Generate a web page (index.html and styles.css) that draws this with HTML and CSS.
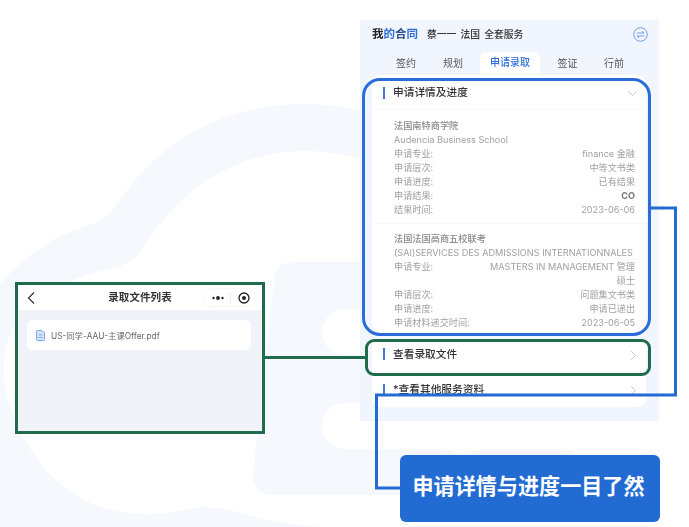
FILE: index.html
```html
<!DOCTYPE html>
<html lang="zh">
<head>
<meta charset="utf-8">
<title>申请详情与进度</title>
<link rel="stylesheet" href="styles.css">
</head>
<body>
<div class="canvas">
  <svg class="watermark" width="689" height="527" viewBox="0 0 689 527" aria-hidden="true">
    <path class="mark" fill-rule="evenodd" d="M0 284 C25 255 55 235 90 225 C102 222 110 214 118 203 C160 140 225 104 305 104 C325 104 345 106 365 112 L365 160 C345 154 325 151 305 151 C240 151 185 185 146 243 C138 257 128 264 114 268 C75 275 30 297 12 330 C2 350 2 375 7 397 C15 425 25 442 33 453 C50 478 75 498 100 507 C125 515 150 515 167 513 C185 511 195 506 207 507 C225 508 245 514 267 520 C290 525 315 527 333 527 L0 527 Z"/>
    <path class="mark" d="M293 262 H365 V309 H345 A23 23 0 0 0 345 355 H365 V403 H345 A23 23 0 0 0 345 449 H440 C448 449 455 452 462 459 C470 452 478 449 486 449 H560 C570 449 575 455 578 462 L600 495 H272 C260 495 253 487 253 475 L274 280 C275 268 282 262 293 262 Z"/>
  </svg>

  <section class="files">
    <header class="files-nav">
      <svg class="back" width="9" height="14" viewBox="0 0 9 14"><path d="M7 1.500 L1.500 7 L7 12.500"/></svg>
      <h2 class="files-title">录取文件列表</h2>
      <div class="capsule">
        <svg width="12" height="6" viewBox="0 0 12 6"><circle cx="1.500" cy="3" r="1.200"/><circle cx="6" cy="3" r="1.900"/><circle cx="10.500" cy="3" r="1.200"/></svg>
        <span class="capsule-sep"></span>
        <svg width="12" height="12" viewBox="0 0 12 12"><circle class="ring" cx="6" cy="6" r="5"/><circle cx="6" cy="6" r="2"/></svg>
      </div>
    </header>
    <div class="files-body">
      <div class="file-card">
        <svg class="file-icon" width="9" height="11" viewBox="0 0 9 11"><path class="doc" d="M1.500 .5 H6 L8.500 3 V9.500 A1 1 0 0 1 7.500 10.500 H1.500 A1 1 0 0 1 .5 9.500 V1.500 A1 1 0 0 1 1.500 .5 Z"/><path class="doc-line" d="M2.500 5 H6.500 M2.500 7.500 H6.500"/></svg>
        <span>US-同学-AAU-主课Offer.pdf</span>
      </div>
    </div>
  </section>

  <section class="phone">
    <div class="head">
      <strong class="brand">我<b>的</b><i>合</i><b>同</b></strong>
      <span class="client">蔡一一 法国 全套服务</span>
      <svg class="swap" width="15" height="15" viewBox="0 0 15 15"><circle cx="7.500" cy="7.500" r="6.800"/><path d="M3.800 6 H11 L9 4.200 M11.200 9 H4 L6 10.800"/></svg>
    </div>
    <nav class="tabs">
      <span>签约</span><span>规划</span><span class="on">申请录取</span><span>签证</span><span>行前</span>
    </nav>
    <div class="sheet">
      <div class="sec-head"><h3>申请详情及进度</h3><svg class="chev" width="11" height="7" viewBox="0 0 11 7"><path d="M1 1 L5.500 5.500 L10 1"/></svg></div>
      <div class="school">
        <h4>法国南特商学院</h4>
        <p class="en">Audencia Business School</p>
        <div class="row"><span>申请专业:</span><span>finance 金融</span></div>
        <div class="row"><span>申请层次:</span><span>中等文书类</span></div>
        <div class="row"><span>申请进度:</span><span>已有结果</span></div>
        <div class="row"><span>申请结果:</span><span class="result">CO</span></div>
        <div class="row"><span>结果时间:</span><span>2023-06-06</span></div>
      </div>
      <div class="school">
        <h4>法国法国高商五校联考</h4>
        <p class="en">(SAI)SERVICES DES ADMISSIONS INTERNATIONNALES</p>
        <div class="row"><span>申请专业:</span><span class="wrap">MASTERS IN MANAGEMENT 管理硕士</span></div>
        <div class="row"><span>申请层次:</span><span>问题集文书类</span></div>
        <div class="row"><span>申请进度:</span><span>申请已递出</span></div>
        <div class="row"><span>申请材料递交时间:</span><span>2023-06-05</span></div>
      </div>
    </div>
    <div class="link link-first"><h3>查看录取文件</h3><svg class="chev" width="7" height="11" viewBox="0 0 7 11"><path d="M1 1 L5.500 5.500 L1 10"/></svg></div>
    <div class="link link-second"><h3>*查看其他服务资料</h3><svg class="chev" width="7" height="11" viewBox="0 0 7 11"><path d="M1 1 L5.500 5.500 L1 10"/></svg></div>
  </section>

  <div class="frame frame-blue"></div>
  <div class="frame frame-green"></div>
  <svg class="wires" width="689" height="527" viewBox="0 0 689 527" aria-hidden="true">
    <path class="wire-green" d="M265 357.500 H366"/>
    <path class="wire-blue" d="M651 208 H675.500 V395 H376.500 V488 H400"/>
  </svg>

  <div class="callout">申请详情与进度一目了然</div>
</div>
</body>
</html>
```

FILE: styles.css
```css
* { box-sizing: border-box; margin: 0; padding: 0; }
html, body { background: #fff; }
body { font-family: Inter, "Noto Sans CJK SC", "Noto Sans", sans-serif; }
.canvas { position: relative; width: 689px; height: 527px; overflow: hidden; background: #fff; }
.watermark, .wires { position: absolute; left: 0; top: 0; }
.mark { fill: #f5f8fd; }
.wires { fill: none; pointer-events: none; }
.wire-green { stroke: #1f6b4b; stroke-width: 3; fill: none; }
.wire-blue { stroke: #226bd3; stroke-width: 3; fill: none; }

/* left window */
.files { position: absolute; left: 15px; top: 282px; width: 250px; height: 152px; border: 3px solid #1f6b4b; display: flex; flex-direction: column; background: #f0f4f8; }
.files-nav { position: relative; height: 25px; background: #fff; display: flex; align-items: center; justify-content: center; flex: none; filter: blur(.35px); }
.back { position: absolute; left: 9px; top: 6px; fill: none; stroke: #333; stroke-width: 1.200; }
.files-title { font-size: 10.500px; font-weight: 700; color: #333; line-height: 25px; letter-spacing: .1px; }
.capsule { position: absolute; left: 185px; top: 3px; width: 54px; height: 19px; border: 1px solid #f6f6f6; border-radius: 10px; display: flex; align-items: center; padding-left: 8px; gap: 6px; }
.capsule svg { fill: #222; flex: none; }
.capsule-sep { width: 1px; height: 11px; background: #eee; flex: none; margin-right: 1px; }
.ring { fill: none; stroke: #222; stroke-width: 1.300; }
.files-body { flex: 1; padding: 10px 11px 10px 9px; filter: blur(.35px); }
.file-card { height: 30px; background: #fff; border-radius: 6px; display: flex; align-items: center; gap: 6px; padding-left: 9px; font-size: 8.300px; color: #666; }
.file-icon { flex: none; }
.doc { fill: #d5e3fa; stroke: #7ba5ea; stroke-width: 1; }
.doc-line { stroke: #7ba5ea; stroke-width: .8; fill: none; }

/* phone */
.phone { position: absolute; left: 360px; top: 20px; width: 299px; height: 401px; background: #f1f6fe; filter: blur(.4px); }
.head { height: 29px; display: flex; align-items: center; padding: 0 12px; position: relative; }
.brand { font-size: 11.500px; font-weight: 700; color: #222; line-height: 29px; white-space: nowrap; }
.brand b { color: #2f6fd6; font-weight: 700; }
.brand i { color: #2a4f8a; font-style: normal; }
.client { font-size: 9.800px; font-weight: 500; color: #333; margin-left: 9px; line-height: 29px; word-spacing: 1.500px; }
.swap { margin-left: auto; margin-right: -1px; fill: none; stroke: #6f9fe6; stroke-width: 1; }
.tabs { height: 23px; margin: 3px 0 0 22.500px; display: flex; align-items: center; font-size: 10px; color: #555; }
.tabs span { line-height: 21px; text-align: center; width: 47px; }
.tabs .on { width: 60px; height: 23px; background: #fff; color: #2f6fd6; font-weight: 500; border-radius: 6px 6px 0 0; margin-left: 3.500px; }
.tabs span:nth-child(4) { margin-left: 4px; }
.tabs span:nth-child(5) { width: 46px; }
.sheet { margin: 0 13px 0 12px; background: #fff; border-radius: 8px 8px 0 0; height: 261px; }
.sec-head { position: relative; height: 35px; padding: 2px 0 0 21px; display: flex; align-items: center; border-bottom: 1px solid #f8f8f8; }
.sec-head h3, .link h3 { font-size: 10.700px; font-weight: 500; color: #333; line-height: 14px; }
.sec-head::before, .link::before { content: ""; position: absolute; left: 11px; width: 2px; height: 12px; background: #3f78d8; top: 12px; }
.sec-head .chev { margin-left: auto; margin-right: 8px; }
.chev { fill: none; stroke: #c9c9c9; stroke-width: 1; flex: none; }
.school { padding: 9px 11px 6px 22px; font-size: 9.150px; color: #a0a0a0; line-height: 14px; border-bottom: 1px solid #f8f8f8; }
.school + .school { padding-top: 8px; }
.school h4 { font-size: 9.200px; font-weight: 500; color: #8a8a8a; line-height: 14px; }
.en { white-space: nowrap; }
.row { display: flex; justify-content: space-between; gap: 20px; }
.row span:first-child { flex: none; }
.row span:last-child { text-align: right; }
.result { font-weight: 700; color: #777; }
.wrap { width: 150px; }
.school:last-child { border-bottom: 0; }
.link { position: relative; margin: 0 13px 0 12px; background: #fff; padding-left: 21px; display: flex; align-items: center; }
.link .chev { margin-left: auto; margin-right: 9px; }
.link-first { height: 36px; margin-top: 3px; padding-bottom: 4px; }
.link-first::before { top: 9px; }
.link-second { height: 31px; margin-top: 1px; padding-bottom: 3px; border-radius: 0 0 8px 8px; }
.link-second::before { top: 8px; }

/* overlays */
.frame { position: absolute; border-style: solid; }
.frame-blue { left: 362px; top: 78px; width: 289px; height: 258px; border-width: 3px; border-color: #2a6cd9; border-radius: 18px; }
.frame-green { left: 365px; top: 339px; width: 286px; height: 37px; border-width: 3px; border-color: #1f6b4b; border-radius: 9px; }
.callout { position: absolute; left: 400px; top: 455px; width: 260px; height: 67px; padding: 0 3px 4px 0; background: #226bd3; border-radius: 6px; color: #fff; font-size: 21.100px; font-weight: 700; line-height: 63px; text-align: center; white-space: nowrap; }
```
